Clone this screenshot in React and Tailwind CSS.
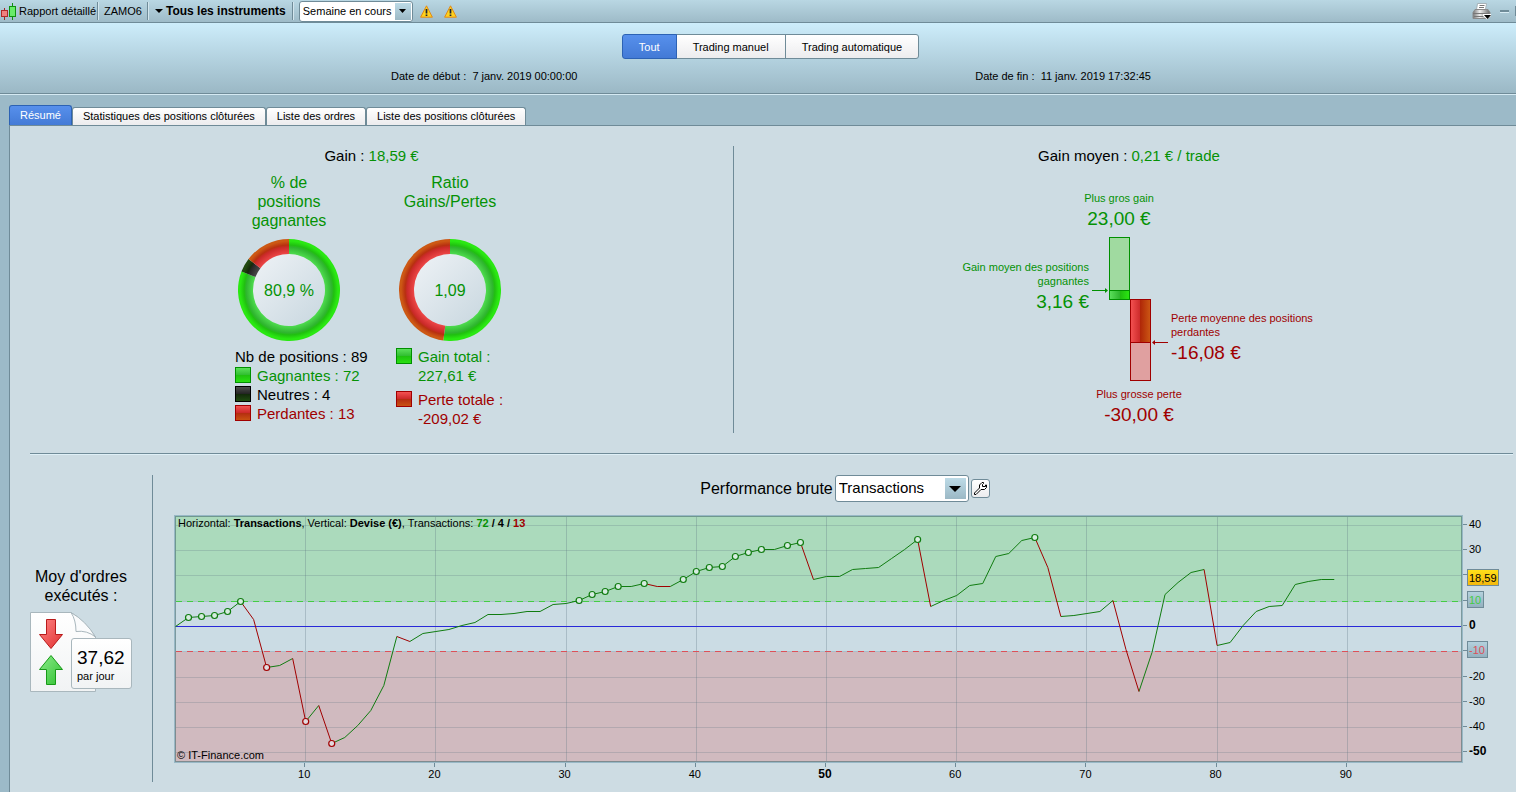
import { useState } from 'react';

// plot height of the running result after each trade
const curve = [
  111, 102, 101, 100, 96, 86, 104, 152, 150, 143, 206, 190, 228, 222, 210, 195, 170, 121, 126, 118,
  116, 114, 110, 107, 99, 99, 98, 96, 96, 89, 88, 85, 79, 76, 71, 71, 68, 71, 71, 64,
  56, 52, 51, 41, 37, 34, 34, 30, 27, 64, 61, 61, 54, 53, 52, 43, 34, 24, 91, 85,
  80, 70, 68, 41, 38, 25, 22, 52, 101, 100, 98, 96, 85, 134, 176, 137, 79, 67, 57, 54,
  130, 127, 110, 96, 91, 90, 69, 66, 64, 64,
];
const highs = [1, 2, 3, 4, 5, 31, 32, 33, 34, 36, 39, 40, 41, 42, 43, 44, 45, 47, 48, 57, 66];
const lows = [7, 10, 12];
const px = (i) => 1.5 + i * 13.02;
const py = (i) => curve[i] + 0.5;

const GREEN = '#059205';
const RED = '#a00000';

const swatches = {
  green: 'border-[#009000] bg-[linear-gradient(#5be05b,#30bd30_50%,#1fc00f_50%,#2ae012)]',
  black: 'border-black bg-[linear-gradient(#4c4c4c,#222_50%,#12280a_50%,#1f4a10)]',
  red: 'border-[#a00000] bg-[linear-gradient(#f45252,#cb2828_50%,#b42c10_50%,#c95212)]',
};

function Swatch({ tone }) {
  return <span className={`mt-px h-4 w-4 shrink-0 border ${swatches[tone]}`} />;
}

function Separator() {
  return <span className="h-[18px] w-[2px] border-l border-[#6f8b98] bg-[#d3e6ee]" />;
}

function Warning() {
  return (
    <svg width="13" height="13" viewBox="0 0 13 13" aria-hidden="true">
      <path d="M6.5 .8 12.4 12.2H.6Z" fill="#ffd21c" stroke="#e08a1a" strokeLinejoin="round" />
      <path d="M6.5 4v4.4M6.5 9.4v1.6" stroke="#1c2230" strokeWidth="1.7" />
    </svg>
  );
}

function arc(cx, r, from, to) {
  const point = (radius, part) => {
    const a = part * 2 * Math.PI;
    return `${cx + radius * Math.sin(a)} ${cx - radius * Math.cos(a)}`;
  };
  const big = to - from > 0.5 ? 1 : 0;
  return `M${point(r, from)}A${r} ${r} 0 ${big} 1 ${point(r, to)}L${point(36, to)}A36 36 0 ${big} 0 ${point(36, from)}Z`;
}

function Donut({ id, parts, label }) {
  const stops = {
    green: ['#50dd50', '#2fb52f', '#20c010', '#2ae812'],
    black: ['#4a4a4a', '#282828', '#142a0a', '#20480f'],
    red: ['#ee4848', '#cb2a2a', '#b83010', '#cc5814'],
  };
  return (
    <svg className="mx-auto block" width="102" height="102" viewBox="0 0 102 102">
      <defs>
        {Object.entries(stops).map(([name, c]) => (
          <radialGradient key={name} id={`${id}-${name}`} gradientUnits="userSpaceOnUse" cx="51" cy="51" r="51">
            <stop offset="0.7" stopColor={c[0]} />
            <stop offset="0.84" stopColor={c[1]} />
            <stop offset="0.88" stopColor={c[2]} />
            <stop offset="0.96" stopColor={c[3]} />
          </radialGradient>
        ))}
        <linearGradient id={`${id}-hub`} x1="0" y1="0" x2="1" y2="1">
          <stop offset="0.1" stopColor="#ebf0f4" />
          <stop offset="0.9" stopColor="#cbd9e1" />
        </linearGradient>
      </defs>
      <circle cx="51" cy="51" r="37" fill={`url(#${id}-hub)`} />
      {parts.map(([tone, from, to]) => (
        <path key={tone} d={arc(51, 51, from, to)} fill={`url(#${id}-${tone})`} />
      ))}
      <text x="51" y="57" textAnchor="middle" fontSize="16" fill={GREEN}>{label}</text>
    </svg>
  );
}

function GainLossBars() {
  return (
    <svg className="block" width="76" height="144" viewBox="0 0 76 144">
      <defs>
        <linearGradient id="bar-green">
          <stop offset="0" stopColor="#5be05b" />
          <stop offset="0.5" stopColor="#2fb52f" />
          <stop offset="0.5" stopColor="#1fba0f" />
          <stop offset="1" stopColor="#2ae812" />
        </linearGradient>
        <linearGradient id="bar-red">
          <stop offset="0" stopColor="#f45252" />
          <stop offset="0.5" stopColor="#cb2828" />
          <stop offset="0.5" stopColor="#b02808" />
          <stop offset="1" stopColor="#cc5814" />
        </linearGradient>
      </defs>
      <rect x="17.5" y="0.5" width="20" height="53" fill="#a0daa0" stroke="#009000" />
      <rect x="17.5" y="53.5" width="20" height="9" fill="url(#bar-green)" stroke="#009000" />
      <rect x="38.5" y="62.5" width="20" height="43" fill="url(#bar-red)" stroke={RED} />
      <rect x="38.5" y="105.5" width="20" height="38" fill="#e0a0a0" stroke={RED} />
      <path d="M0 53.5h15" stroke="#009000" />
      <path d="M13 51v5l3-2.5Z" fill="#009000" />
      <path d="M61 105.5h15" stroke={RED} />
      <path d="M63 103v5l-3-2.5Z" fill={RED} />
    </svg>
  );
}

function OrdersPerDay() {
  return (
    <div className="relative h-20 w-[102px]">
      <svg className="absolute left-0 top-0" width="67" height="80" viewBox="0 0 67 80" aria-hidden="true">
        <defs>
          <linearGradient id="sheet" x2="0" y2="1">
            <stop offset="0" stopColor="#fff" />
            <stop offset="1" stopColor="#f1f3f4" />
          </linearGradient>
          <linearGradient id="down" x1="0" y1="0" x2="1" y2="1">
            <stop offset="0" stopColor="#ff8484" />
            <stop offset="1" stopColor="#e03030" />
          </linearGradient>
          <linearGradient id="up" x1="0" y1="0" x2="1" y2="1">
            <stop offset="0" stopColor="#8cec8c" />
            <stop offset="1" stopColor="#30c030" />
          </linearGradient>
        </defs>
        <path d="M.5.5H41Q54 8 65.5 25V79.5H.5Z" fill="url(#sheet)" stroke="#a9b7bd" />
        <path d="M41 .5Q46 8 46 19.5Q57 18 65.5 25Q56 9 41 .5Z" fill="#fafbfc" stroke="#a9b7bd" />
        <path d="M16.5 7.5h9v15h7L21 36.5 9.5 22.5h7Z" fill="url(#down)" stroke="#b81a1a" />
        <path d="M16.5 72.5h9v-15h7L21 43.5 9.5 57.5h7Z" fill="url(#up)" stroke="#189a18" />
      </svg>
      <div className="absolute bottom-[3px] right-0 flex h-[51px] w-[61px] flex-col justify-end rounded-[3px] border border-[#a9b7bd] bg-linear-to-b from-white to-[#f1f3f4] pb-1 pl-[5px]">
        <span className="text-[19px] leading-[20px]">37,62</span>
        <span className="text-[11px] leading-[16px]">par jour</span>
      </div>
    </div>
  );
}

function PerformanceChart() {
  const up = [];
  const down = [];
  let rising = true;
  for (let i = 1; i < curve.length; i++) {
    if (curve[i] !== curve[i - 1]) rising = curve[i] < curve[i - 1];
    (rising ? up : down).push(`M${px(i - 1)} ${py(i - 1)}L${px(i)} ${py(i)}`);
  }
  const rows = [[40, 10], [30, 35], [20, 60], [-20, 162], [-30, 187], [-40, 212], [-50, 237]];
  const columns = [10, 20, 30, 40, 50, 60, 70, 80, 90];

  return (
    <svg className="mt-[13px] block h-auto w-full text-[11px]" viewBox="0 0 1342 267">
      <defs>
        <linearGradient id="tag-gold" x2="0" y2="1">
          <stop offset="0" stopColor="#ffe11a" />
          <stop offset="1" stopColor="#f4b60c" />
        </linearGradient>
        <linearGradient id="tag-blue" x2="0" y2="1">
          <stop offset="0" stopColor="#b5d2de" />
          <stop offset="1" stopColor="#93b0be" />
        </linearGradient>
      </defs>
      <rect width="1289" height="248" fill="#cbdce4" />
      <rect width="1289" height="86" fill="#abdabc" />
      <rect y="137" width="1289" height="111" fill="#d0babf" />
      {rows.map(([v, y]) => (
        <path key={v} d={`M2 ${y + 0.5}H1287`} stroke="#5c7480" strokeOpacity="0.25" />
      ))}
      {columns.map((v) => (
        <path key={v} d={`M${Math.round(v * 13.02 + 1) + 0.5} 2V246`} stroke="#5c7480" strokeOpacity="0.3" />
      ))}
      <path d="M2 86.5H1287M2 136.5H1287" stroke="#a9bfca" />
      <path d="M2 86.5H1287" stroke="#44cc44" strokeDasharray="6 5" />
      <path d="M2 136.5H1287" stroke="#dd5058" strokeDasharray="6 5" />
      <path d="M2 111.5H1287" stroke="#2828d8" />
      <rect x="0.5" y="0.5" width="1288" height="247" fill="none" stroke="#98b8c6" />
      <rect x="1.5" y="1.5" width="1286" height="245" fill="none" stroke="#486c70" strokeOpacity="0.6" />
      <path d={up.join('')} fill="none" stroke="#107c10" />
      <path d={down.join('')} fill="none" stroke={RED} />
      {highs.map((i) => (
        <circle key={i} cx={px(i)} cy={py(i)} r="3" fill="#d6ece0" stroke="#107c10" strokeWidth="1.2" />
      ))}
      {lows.map((i) => (
        <circle key={i} cx={px(i)} cy={py(i)} r="3" fill="#e2dade" stroke={RED} strokeWidth="1.2" />
      ))}
      <text x="4" y="12">
        Horizontal: <tspan fontWeight="bold">Transactions</tspan>, Vertical: <tspan fontWeight="bold">Devise (€)</tspan>, Transactions:{' '}
        <tspan fontWeight="bold" fill={GREEN}>72</tspan><tspan fontWeight="bold"> / 4 / </tspan>
        <tspan fontWeight="bold" fill={RED}>13</tspan>
      </text>
      <text x="3" y="244">© IT-Finance.com</text>

      {columns.map((v) => (
        <g key={v}>
          <path d={`M${Math.round(v * 13.02) + 0.5} 248v4`} stroke="#6f8b98" />
          <text x={v * 13.02} y="263" textAnchor="middle" className={v === 50 ? 'text-[12px] font-bold' : ''}>{v}</text>
        </g>
      ))}
      {[9, 34, 59, 85, 110, 135, 161, 186, 211, 236].map((y) => (
        <path key={y} d={`M1289 ${y + 0.5}h4`} stroke="#6f8b98" />
      ))}
      {[['40', 13], ['30', 38], ['-20', 165], ['-30', 190], ['-40', 215]].map(([v, y]) => (
        <text key={v} x="1295" y={y}>{v}</text>
      ))}
      <text x="1295" y="114" className="text-[12px] font-bold">0</text>
      <text x="1295" y="240" className="text-[12px] font-bold">-50</text>
      <rect x="1293.5" y="54.5" width="31" height="16" fill="url(#tag-gold)" stroke="#6f8b98" />
      <text x="1295" y="67">18,59</text>
      <rect x="1293.5" y="76.5" width="16" height="16" fill="url(#tag-blue)" stroke="#6f8b98" />
      <text x="1295" y="89" fill="#44cc44">10</text>
      <rect x="1293.5" y="126.5" width="20" height="16" fill="url(#tag-blue)" stroke="#6f8b98" />
      <text x="1295" y="139" fill="#dd5058">-10</text>
    </svg>
  );
}

function Toolbar() {
  return (
    <header className="flex h-[23px] items-center border-b border-[#6f8b98] bg-linear-to-b from-[#b9d7e3] to-[#9ebbc8] pl-px text-[11px]">
      <svg width="16" height="17" viewBox="0 0 16 17" aria-hidden="true">
        <path d="M3.5 5v12" stroke="#a02828" />
        <rect x="0.5" y="7.5" width="6" height="6" fill="#f08080" stroke="#b02828" />
        <path d="M11.5 0v17" stroke="#109010" />
        <rect x="8.5" y="3.5" width="6" height="10" fill="#68ec68" stroke="#109010" />
      </svg>
      <span className="ml-[2px] mr-px">Rapport détaillé</span>
      <Separator />
      <span className="mx-[5px]">ZAMO6</span>
      <Separator />
      <button type="button" className="mx-[6px] flex items-center gap-[3px] text-[12px] font-bold">
        <svg width="8" height="4" viewBox="0 0 8 4" aria-hidden="true"><path d="M0 0h8L4 4Z" /></svg>
        Tous les instruments
      </button>
      <Separator />
      <label className="relative ml-[5px] flex">
        <select aria-label="Période" className="h-[21px] w-[114px] appearance-none rounded-[3px] border border-[#6f8b98] bg-white pl-[3px] text-[11px]">
          <option>Semaine en cours</option>
        </select>
        <span className="pointer-events-none absolute right-[2px] top-[2px] flex h-[17px] w-4 items-center justify-center bg-linear-to-b from-[#bddbe7] to-[#9bb8c5]">
          <svg width="7" height="4" viewBox="0 0 7 4"><path d="M0 0h7L3.5 4Z" /></svg>
        </span>
      </label>
      <span className="ml-[7px] flex gap-[11px]"><Warning /><Warning /></span>

      <button type="button" aria-label="Imprimer" className="ml-auto">
        <svg width="20" height="18" viewBox="0 0 20 18">
          <defs>
            <linearGradient id="printer">
              <stop offset="0" stopColor="#777" />
              <stop offset="0.4" stopColor="#eee" />
              <stop offset="1" stopColor="#6a6a6a" />
            </linearGradient>
          </defs>
          <path d="M5.5 1.5h9l-1 6h-9Z" fill="#fff" stroke="#a5b2b8" />
          <path d="M7.5 3.5h5M7 5.5h5" stroke="#777" />
          <path d="M3 7.5h13l2 3v4l-2 2H1v-6Z" fill="url(#printer)" stroke="#8a8a8a" />
          <path d="M1 11.5h16M2 14.5h12" stroke="#777" />
          <path d="M11 12h8v2l-4 3.5-4-3.5Z" fill="#fff" />
          <path d="M12 13h7l-3.5 4Z" />
        </svg>
      </button>
      <button type="button" aria-label="Réduire" className="ml-2 h-[3px] w-[9px] border-b border-[#d8ebf3] bg-[#6f8b98]" />
      <button type="button" aria-label="Agrandir" className="ml-[6px] h-[10px] w-px bg-[#6f8b98]" />
    </header>
  );
}

const modes = ['Tout', 'Trading manuel', 'Trading automatique'];
const tabs = ['Résumé', 'Statistiques des positions clôturées', 'Liste des ordres', 'Liste des positions clôturées'];

export default function App() {
  const [mode, setMode] = useState(modes[0]);
  const [tab, setTab] = useState(tabs[0]);

  return (
    <div className="flex min-h-screen flex-col bg-[#9cbac8] font-['Liberation_Sans',Arial,sans-serif] text-black">
      <Toolbar />

      <section className="flex flex-col items-center border-b border-[#6f8b98] bg-linear-to-b from-[#cdedfb] to-[#9bb8c5] pb-[10px] pl-[26px] pt-[11px] text-[11px] leading-[14px]">
        <div className="flex">
          {modes.map((name) => (
            <button
              key={name}
              type="button"
              onClick={() => setMode(name)}
              className={`-ml-px h-[25px] border px-4 first:rounded-l-[3px] last:rounded-r-[3px] ${
                mode === name
                  ? 'z-10 border-[#2c62b4] bg-linear-to-b from-[#5790ec] to-[#437ad6] text-white'
                  : 'border-[#6f8b98] bg-linear-to-b from-white to-[#ececee]'
              }`}
            >
              {name}
            </button>
          ))}
        </div>
        <div className="mt-[10px] flex w-[51%] justify-between whitespace-pre">
          <span>Date de début :  7 janv. 2019 00:00:00</span>
          <span>Date de fin :  11 janv. 2019 17:32:45</span>
        </div>
      </section>

      <nav className="flex items-end border-t border-[#d5eaf3] pl-[9px] pt-[10px] text-[11px]">
        {tabs.map((name) => (
          <button
            key={name}
            type="button"
            onClick={() => setTab(name)}
            className={`rounded-t-[3px] border border-b-0 px-[10px] ${
              tab === name
                ? 'h-5 border-[#2c62b4] bg-linear-to-b from-[#5790ec] to-[#437ad6] text-white'
                : 'h-[18px] border-[#6f8b98] bg-linear-to-b from-white to-[#ececee]'
            }`}
          >
            {name}
          </button>
        ))}
      </nav>

      <main className="ml-[9px] flex-1 border-l border-t border-[#6f8b98] bg-[#cddce3] pt-5">
        <div className="grid grid-cols-[723fr_783fr]">
          <section className="text-[15px] leading-[19px]">
            <h2 className="text-center leading-[20px]">Gain : <span className="text-[#059205]">18,59 €</span></h2>
            <div className="mt-[7px] flex justify-center gap-[21px]">
              <div className="w-[140px]">
                <div className="w-[108px] text-center">
                  <h3 className="mx-auto mb-[9px] h-[57px] w-20 text-[16px] text-[#059205]">% de positions gagnantes</h3>
                  <Donut id="win" label="80,9 %" parts={[['green', 0, 72 / 89], ['black', 72 / 89, 76 / 89], ['red', 76 / 89, 1]]} />
                </div>
                <p className="mt-[6px] whitespace-nowrap">Nb de positions : 89</p>
                <p className="flex gap-[6px] text-[#059205]"><Swatch tone="green" />Gagnantes : 72</p>
                <p className="flex gap-[6px]"><Swatch tone="black" />Neutres : 4</p>
                <p className="flex gap-[6px] text-[#a00000]"><Swatch tone="red" />Perdantes : 13</p>
              </div>
              <div className="w-28">
                <div className="w-[108px] text-center">
                  <h3 className="mb-[9px] h-[57px] text-[16px] text-[#059205]">Ratio Gains/Pertes</h3>
                  <Donut id="ratio" label="1,09" parts={[['green', 0, 0.521], ['red', 0.521, 1]]} />
                </div>
                <p className="mt-[6px] flex gap-[6px] whitespace-nowrap text-[#059205]"><Swatch tone="green" /><span>Gain total :<br />227,61 €</span></p>
                <p className="mt-[5px] flex gap-[6px] whitespace-nowrap text-[#a00000]"><Swatch tone="red" /><span>Perte totale :<br />-209,02 €</span></p>
              </div>
            </div>
          </section>

          <section className="h-[287px] border-l border-[#6f8b98] pl-2 text-center text-[11px] leading-[14px]">
            <h2 className="text-[15px] leading-[20px]">Gain moyen : <span className="text-[#059205]">0,21 € / trade</span></h2>
            <div className="mt-[25px] pr-5 text-[#059205]">
              <p>Plus gros gain</p>
              <p className="text-[19px] leading-[28px]">23,00 €</p>
            </div>
            <div className="mt-1 flex justify-center gap-[3px]">
              <div className="w-[147px] pt-[23px] text-right text-[#059205]">
                <p>Gain moyen des positions gagnantes</p>
                <p className="text-[19px] leading-[28px]">3,16 €</p>
              </div>
              <GainLossBars />
              <div className="w-[145px] pt-[74px] text-left text-[#a00000]">
                <p>Perte moyenne des positions perdantes</p>
                <p className="text-[19px] leading-[28px]">-16,08 €</p>
              </div>
            </div>
            <div className="mt-[6px] pl-5 text-[#a00000]">
              <p>Plus grosse perte</p>
              <p className="text-[19px] leading-[28px]">-30,00 €</p>
            </div>
          </section>
        </div>

        <div className="ml-5 mr-[3px] mt-5 h-[2px] border-t border-[#6f8b98] bg-[#dff0f7]" />

        <div className="flex pb-[10px] pl-5 pt-5">
          <section className="flex w-[123px] shrink-0 flex-col justify-center border-r border-[#6f8b98]">
            <p className="mb-[7px] mt-[2px] w-[102px] text-center text-[16px] leading-[19px]">Moy d'ordres exécutés :</p>
            <OrdersPerDay />
          </section>
          <section className="min-w-0 flex-1 pl-[21px]">
            <div className="flex h-[27px] items-center justify-center gap-[2px]">
              <label htmlFor="unit" className="text-[16px]">Performance brute</label>
              <div className="relative flex">
                <select id="unit" className="h-[27px] w-[134px] appearance-none rounded-[3px] border border-[#6f8b98] bg-white pl-[3px] text-[15px]">
                  <option>Transactions</option>
                </select>
                <span className="pointer-events-none absolute right-[3px] top-[3px] flex h-[21px] w-[21px] items-center justify-center bg-linear-to-b from-[#bddbe7] to-[#9bb8c5]">
                  <svg width="12" height="6" viewBox="0 0 12 6"><path d="M0 0h12L6 6Z" /></svg>
                </span>
              </div>
              <button type="button" aria-label="Paramètres" className="flex h-[19px] w-[19px] items-center justify-center rounded-[3px] border border-[#6f8b98] bg-linear-to-b from-white to-[#ececee]">
                <svg width="15" height="15" viewBox="0 0 15 15">
                  <path
                    d="M10.5 1.5H9L6.5 4v3L1.5 12v1.5H3L8 8.500h3.500L13.500 6.500V4h-1v1.500H9.500V3.500l1-1Z"
                    fill="#fff"
                    stroke="#000"
                    strokeLinejoin="round"
                  />
                </svg>
              </button>
            </div>
            <PerformanceChart />
          </section>
        </div>
      </main>
    </div>
  );
}
